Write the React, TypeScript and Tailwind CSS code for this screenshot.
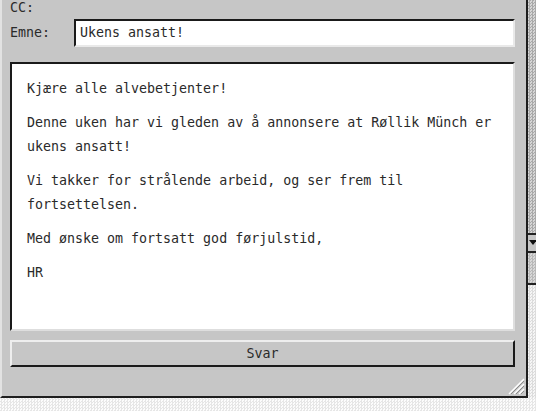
const mono = "font-['DejaVu_Sans_Mono','Liberation_Mono',monospace]"

const paragraphs = [
  "Kjære alle alvebetjenter!",
  "Denne uken har vi gleden av å annonsere at Røllik Münch er ukens ansatt!",
  "Vi takker for strålende arbeid, og ser frem til fortsettelsen.",
  "Med ønske om fortsatt god førjulstid,",
  "HR",
]

const App = () => {
  return (
    <div className="flex h-[411px] w-[536px] flex-col overflow-hidden bg-[repeating-conic-gradient(#e6e6e6_0_25%,#fcfcfc_0_50%)] bg-[length:3px_3px]">
      <div className="flex h-[398px] w-[536px] shrink-0">
        {/* mail window */}
        <div
          className={`relative flex h-[398px] w-[528px] shrink-0 flex-col border-b-2 border-l-2 border-r-2 border-b-[#1e1e1e] border-l-[#e2e2e2] border-r-[#1e1e1e] bg-[#c6c6c6] pl-2 pr-[11px] text-[13.3px] text-[#2a2a2a] ${mono}`}
        >
          <div className="flex h-[17px] items-start pt-[1px] leading-[14px]">CC:</div>

          <div className="flex h-[31px] items-center">
            <span className="w-[64px] leading-none">Emne:</span>
            <div className="flex h-[28px] flex-1 items-center border-2 border-b-[#e9e9e9] border-l-[#1a1a1a] border-r-[#e9e9e9] border-t-[#1a1a1a] bg-white px-[4px]">
              Ukens ansatt!
            </div>
          </div>

          <div className="mt-[14px] h-[269px] border-2 border-b-[#dedede] border-l-[#1a1a1a] border-r-[#dedede] border-t-[#1a1a1a] bg-white px-[15px] pt-[13px] leading-[24px]">
            {paragraphs.map((p) => (
              <p key={p} className="mb-[10px]">
                {p}
              </p>
            ))}
          </div>

          <button className="mt-[9px] flex h-[27px] w-full items-center justify-center border-2 border-b-[#1a1a1a] border-l-[#eeeeee] border-r-[#1a1a1a] border-t-[#eeeeee] bg-[#c6c6c6] leading-none">
            Svar
          </button>

          {/* resize grip */}
          <svg className="absolute bottom-[1px] right-[1px]" width="18" height="18" viewBox="0 0 18 18">
            {[0, 5, 10].map((o) => (
              <g key={o}>
                <line x1={2 + o} y1="17" x2="17" y2={2 + o} stroke="#ffffff" strokeWidth="1.5" />
                <line x1={4 + o} y1="17" x2="17" y2={4 + o} stroke="#8a8a8a" strokeWidth="1" />
              </g>
            ))}
          </svg>
        </div>

        {/* background window edge with scrollbar */}
        <div className="flex flex-1 flex-col bg-[repeating-conic-gradient(#a9a9a9_0_25%,#d6d6d6_0_50%)] bg-[length:3px_3px]">
          <div className="h-[233px]" />
          <div className="flex h-[18px] items-center border-t-2 border-[#222] bg-[#c6c6c6] pl-[1px]">
            <svg width="8" height="6" viewBox="0 0 8 6">
              <path d="M0 0H8L4 5Z" fill="#111" />
            </svg>
          </div>
          <div className="h-[34px] border-y-2 border-[#222] bg-[repeating-conic-gradient(#b8b8b8_0_25%,#d8d8d8_0_50%)] bg-[length:3px_3px]" />
          <div className="flex-1 bg-[repeating-conic-gradient(#dcdcdc_0_25%,#f6f6f6_0_50%)] bg-[length:3px_3px]" />
        </div>
      </div>
    </div>
  )
}

export default App
